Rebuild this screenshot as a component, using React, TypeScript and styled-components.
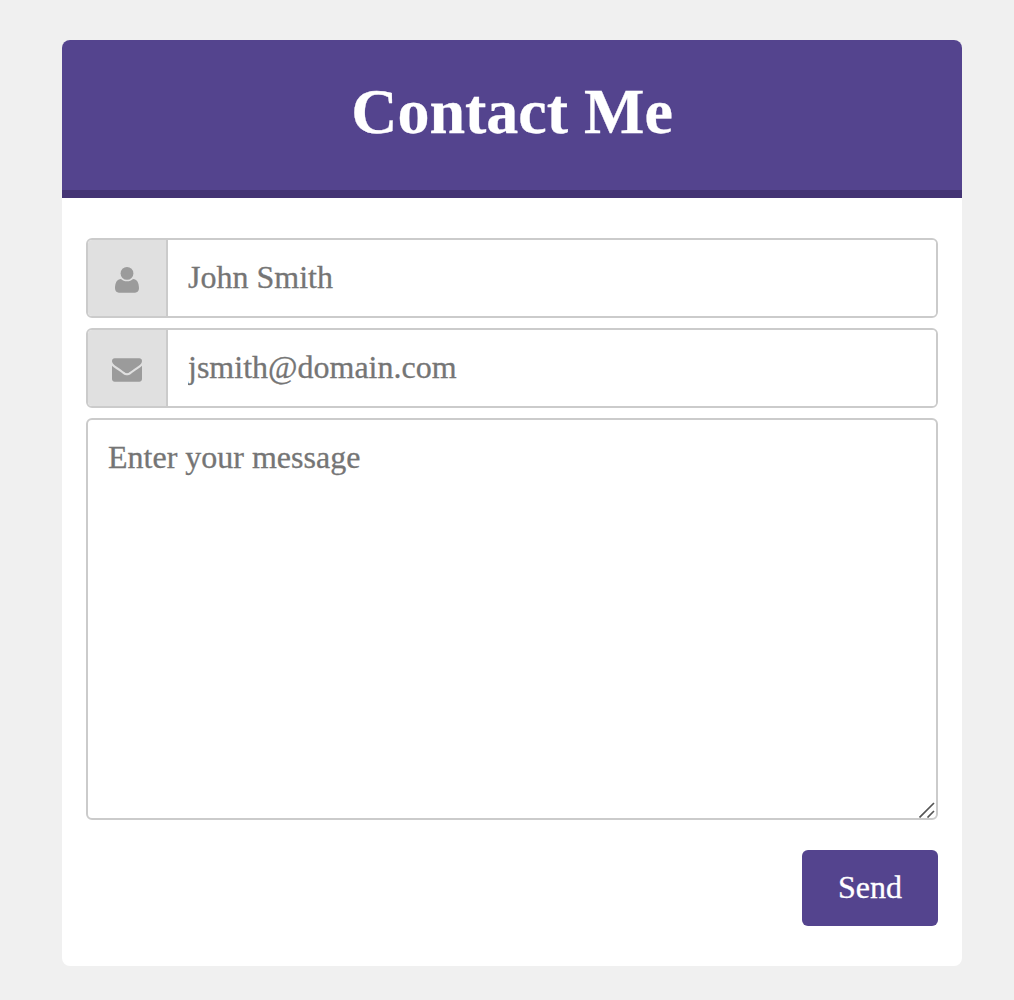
import React from 'react';
import styled, { createGlobalStyle } from 'styled-components';

const serif = '"Liberation Serif", "Times New Roman", serif';
const purple = '#54448e';
const line = '#cbcbcb';

const GlobalStyle = createGlobalStyle`
  * { box-sizing: border-box; }
  body {
    margin: 0;
    background: #f0f0f0;
    font-family: ${serif};
    -webkit-text-stroke: 0.3px currentColor;
  }
`;

const Page = styled.main`
  min-height: 1000px;
  padding: 40px 52px 34px 62px;
`;

const Card = styled.section`
  background: #fff;
  border-radius: 8px;
  overflow: hidden;
`;

const Header = styled.header`
  height: 158px;
  padding-top: 35px;
  background: ${purple};
  border-bottom: 8px solid #443474;
  text-align: center;
`;

const Title = styled.h1`
  margin: 0;
  color: #fff;
  font-size: 64px;
  line-height: 74px;
  font-weight: bold;
`;

const Form = styled.form`
  display: flex;
  flex-direction: column;
  gap: 10px;
  padding: 40px 24px;
`;

const Field = styled.label`
  display: flex;
  height: 80px;
  border: 2px solid ${line};
  border-radius: 6px;
  overflow: hidden;
`;

const Addon = styled.span<{ $drop: number }>`
  display: flex;
  align-items: center;
  justify-content: center;
  width: 80px;
  padding-top: ${(p) => p.$drop}px;
  background: #e0e0e0;
  border-right: 2px solid ${line};
  color: #9b9b9b;
`;

const Input = styled.input`
  flex: 1;
  min-width: 0;
  padding: 0 20px 2px;
  border: 0;
  outline: 0;
  background: #fff;
  font: 32px ${serif};
  &::placeholder { color: #757575; }
`;

const MessageBox = styled.div`
  position: relative;
  height: 402px;
`;

const Message = styled.textarea`
  display: block;
  width: 100%;
  height: 100%;
  padding: 19px 20px;
  border: 2px solid ${line};
  border-radius: 6px;
  outline: 0;
  resize: none;
  font: 32px ${serif};
  &::placeholder { color: #757575; }
`;

const Grip = styled.svg`
  position: absolute;
  right: 3px;
  bottom: 2px;
  pointer-events: none;
`;

const Send = styled.button`
  align-self: flex-end;
  width: 136px;
  height: 76px;
  margin-top: 20px;
  padding: 0 0 2px;
  border: 0;
  border-radius: 6px;
  background: ${purple};
  color: #fff;
  font: 32px ${serif};
`;

const UserIcon = () => (
  <svg width="24" height="26" viewBox="0 0 24 26" fill="currentColor">
    <circle cx="12" cy="6.4" r="6.4" />
    <path d="M6 11.9C7.5 13.4 9.6 14.2 12 14.2s4.5-.8 6-2.3c3.9 0 6 3.8 6 9.4 0 2.7-1.6 4.4-4 4.4H4c-2.4 0-4-1.7-4-4.4 0-5.6 2.1-9.4 6-9.4z" />
  </svg>
);

const EnvelopeIcon = () => (
  <svg width="30" height="24" viewBox="0 256 1792 1408" fill="currentColor">
    <path d="M1792 710v794q0 66-47 113t-113 47h-1472q-66 0-113-47t-47-113v-794q44 49 101 87 362 246 497 345 57 42 92.500 65.500t94.500 48 110 24.500h2q51 0 110-24.500t94.500-48 92.500-65.500q170-123 498-345 57-39 100-87zm0-294q0 79-49 151t-122 123q-376 261-468 325-10 7-42.500 31t-54 38.500-52 32.500-57.500 27-50 9h-2q-23 0-50-9t-57.500-27-52-32.500-54-38.500-42.500-31q-91-64-262-182.500t-205-142.500q-62-42-117-115.500t-55-136.500q0-78 41.500-130t118.500-52h1472q65 0 112.500 47t47.500 113z" />
  </svg>
);

export default function App() {
  return (
    <>
      <GlobalStyle />
      <Page>
        <Card>
          <Header><Title>Contact Me</Title></Header>
          <Form>
            <Field>
              <Addon $drop={3}><UserIcon /></Addon>
              <Input type="text" placeholder="John Smith" />
            </Field>
            <Field>
              <Addon $drop={4}><EnvelopeIcon /></Addon>
              <Input type="email" placeholder="jsmith@domain.com" />
            </Field>
            <MessageBox>
              <Message placeholder="Enter your message" />
              <Grip width="16" height="16" viewBox="0 0 16 16" stroke="#555" strokeWidth="1.7">
                <path d="M0.500 15.500L15 1M8.500 15.500L15 9" />
              </Grip>
            </MessageBox>
            <Send type="button">Send</Send>
          </Form>
        </Card>
      </Page>
    </>
  );
}
